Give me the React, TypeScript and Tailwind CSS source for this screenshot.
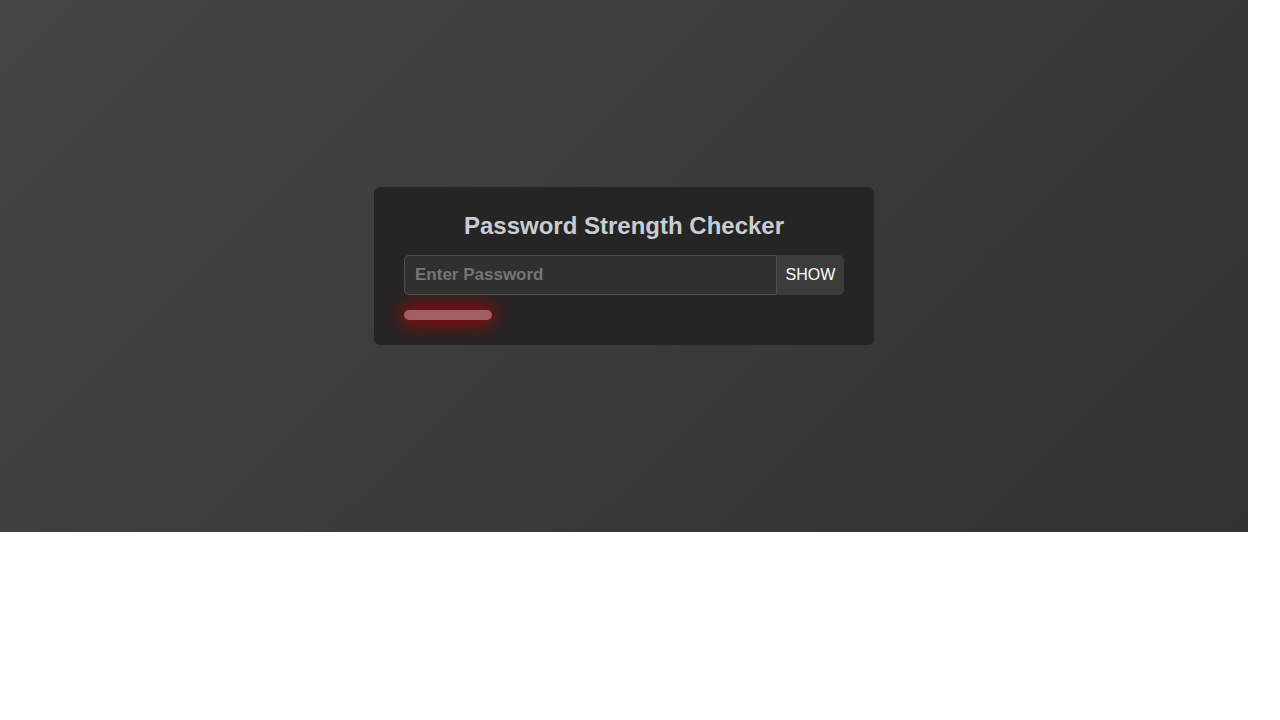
import React from "react";

export default function App() {
  return (
    <div className="w-[1248px] h-[532px] flex items-center justify-center bg-[linear-gradient(135deg,#454545,#323232)] [font-family:'Liberation_Sans',Arial,sans-serif]">
      <div className="w-[500px] bg-[#252525] rounded-[6px] px-[30px] pt-[25px] pb-[25px]">
        <h2 className="text-center text-[24px] leading-[28px] font-bold text-[#c9cdd2] mb-[15px]">
          Password Strength Checker
        </h2>
        <div className="flex h-[40px]">
          <input
            type="password"
            placeholder="Enter Password"
            className="flex-1 min-w-0 h-full bg-[#303030] border border-[#4f4f4f] rounded-l-[5px] px-[10px] text-[17px] font-bold text-[#ddd] placeholder:text-[#757575] outline-none [font-family:'Liberation_Sans',Arial,sans-serif]"
          />
          <button className="w-[67px] h-full bg-[#3c3c3c] rounded-r-[5px] text-white text-[16px] [font-family:'Liberation_Sans',Arial,sans-serif]">
            SHOW
          </button>
        </div>
        <div className="mt-[15px] h-[10px] w-[440px]">
          <div className="h-full w-[20%] rounded-full bg-[#a15e63] shadow-[0_0_20px_3px_#b00000]" />
        </div>
      </div>
    </div>
  );
}
